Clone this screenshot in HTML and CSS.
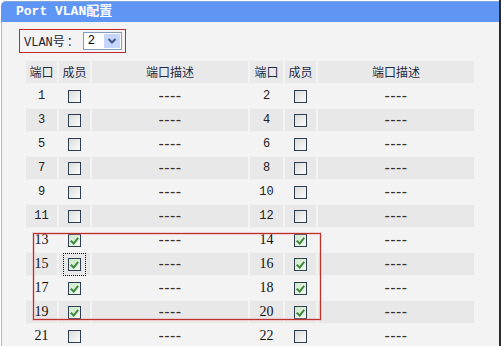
FILE: index.html
```html
<html lang="zh-CN">
<head>
    <meta charset="UTF-8">
    <title>Port VLAN配置</title>
    <link rel="stylesheet" href="styles.css">
</head>
<body>
<div class="page">
    <div class="panel-title">Port VLAN配置</div>
    <div class="panel-body">
        <div class="vlan-pick">
            <span class="vlan-label">VLAN号<span class="colon">：</span></span>
            <div class="fake-select">
                <span class="fake-select-value">2</span>
                <span class="fake-select-btn">
                    <svg width="16" height="14" viewBox="0 0 16 14"><path d="M4.5 5 L8 8.5 L11.5 5" fill="none" stroke="#3f5687" stroke-width="2"/></svg>
                </span>
            </div>
        </div>

        <table class="port-table">
            <colgroup>
                <col class="c-port"><col class="c-member"><col class="c-desc">
                <col class="c-port2"><col class="c-member"><col class="c-desc">
            </colgroup>
            <tr>
                <th>端口</th><th>成员</th><th>端口描述</th>
                <th>端口</th><th>成员</th><th>端口描述</th>
            </tr>
            <tr>
                <td class="port">1</td><td><span class="cb"></span></td><td class="desc">----</td>
                <td class="port">2</td><td><span class="cb"></span></td><td class="desc">----</td>
            </tr>
            <tr class="alt">
                <td class="port">3</td><td><span class="cb"></span></td><td class="desc">----</td>
                <td class="port">4</td><td><span class="cb"></span></td><td class="desc">----</td>
            </tr>
            <tr>
                <td class="port">5</td><td><span class="cb"></span></td><td class="desc">----</td>
                <td class="port">6</td><td><span class="cb"></span></td><td class="desc">----</td>
            </tr>
            <tr class="alt">
                <td class="port">7</td><td><span class="cb"></span></td><td class="desc">----</td>
                <td class="port">8</td><td><span class="cb"></span></td><td class="desc">----</td>
            </tr>
            <tr>
                <td class="port">9</td><td><span class="cb"></span></td><td class="desc">----</td>
                <td class="port">10</td><td><span class="cb"></span></td><td class="desc">----</td>
            </tr>
            <tr class="alt">
                <td class="port">11</td><td><span class="cb"></span></td><td class="desc">----</td>
                <td class="port">12</td><td><span class="cb"></span></td><td class="desc">----</td>
            </tr>
            <tr>
                <td class="port serif">13</td><td><span class="cb on"></span></td><td class="desc">----</td>
                <td class="port serif">14</td><td><span class="cb on"></span></td><td class="desc">----</td>
            </tr>
            <tr class="alt">
                <td class="port serif">15</td><td><span class="cb on focus"></span></td><td class="desc">----</td>
                <td class="port serif">16</td><td><span class="cb on"></span></td><td class="desc">----</td>
            </tr>
            <tr>
                <td class="port serif">17</td><td><span class="cb on"></span></td><td class="desc">----</td>
                <td class="port serif">18</td><td><span class="cb on"></span></td><td class="desc">----</td>
            </tr>
            <tr class="alt">
                <td class="port serif">19</td><td><span class="cb on"></span></td><td class="desc">----</td>
                <td class="port serif">20</td><td><span class="cb on"></span></td><td class="desc">----</td>
            </tr>
            <tr>
                <td class="port serif">21</td><td><span class="cb"></span></td><td class="desc">----</td>
                <td class="port serif">22</td><td><span class="cb"></span></td><td class="desc">----</td>
            </tr>
        </table>

        <!-- red annotation around ports 13-20 -->
        <div class="mark"></div>
    </div>
</div>
</body>
</html>
```

FILE: styles.css
```css
body {
    margin: 0;
    background: #fff;
    font-family: "Liberation Mono", "Noto Sans CJK SC", monospace;
    color: #222;
}

.page {
    width: 499px;
    height: 346px;
    border-right: 2px solid #2b2b2b;
    overflow: hidden;
}

.panel-title {
    margin: 1px 0 0 1px;
    height: 21px;
    line-height: 20px;
    padding-left: 15px;
    background: #5f95f5;
    border-top: 1px solid #86a3d3;
    box-sizing: border-box;
    border-radius: 5px 0 0 0;
    color: #fff;
    font-size: 13px;
    font-weight: bold;
}

.panel-body {
    position: relative;
    margin-left: 1px;
    height: 324px;
    padding-top: 7px;
    box-sizing: border-box;
    background: #f3f3f3;
    border-left: 1px solid #dcb08a;
}

/* VLAN picker */
.vlan-pick {
    display: flex;
    align-items: center;
    gap: 4px;
    width: max-content;
    height: 22px;
    margin-left: 17px;
    padding: 0 3px 0 4px;
    border: 1px solid #c0282d;
}

.vlan-label {
    font-size: 12px;
    color: #1c2233;
}

.vlan-label .colon {
    padding-left: 2px;
}

.fake-select {
    display: flex;
    align-items: center;
    justify-content: space-between;
    width: 39px;
    height: 18px;
    box-sizing: border-box;
    border: 1px solid #7f9db9;
    background: #fff;
    padding: 0 1px 0 4px;
}

.fake-select-value {
    font-size: 12px;
    color: #000;
}

.fake-select-btn {
    display: block;
    width: 16px;
    height: 14px;
    background: #c5d5fb;
}

.fake-select-btn svg {
    display: block;
}

/* port table */
.port-table {
    margin: 6px 0 0 22px;
    border-collapse: separate;
    border-spacing: 2px;
    table-layout: fixed;
    width: 452px;
}

.c-port { width: 31px; }
.c-port2 { width: 33px; }
.c-member { width: 31px; }
.c-desc { width: 156px; }

.port-table th,
.port-table td {
    height: 22px;
    padding: 0;
    text-align: center;
    vertical-align: middle;
    line-height: 22px;
}

.port-table th {
    background: #e9e9e9;
    font-family: "Noto Sans CJK SC", sans-serif;
    font-weight: normal;
    font-size: 12px;
    color: #1e2a44;
}

.port-table tr.alt td {
    background: #e8e8e8;
}

.port {
    font-size: 12px;
}

.port.serif {
    font-family: "Liberation Serif", serif;
    font-size: 14px;
    color: #111;
}

.desc {
    font-family: "Liberation Sans", sans-serif;
    font-size: 16px;
    letter-spacing: 0.4px;
    color: #333;
}

/* checkboxes */
.cb {
    position: relative;
    display: block;
    width: 13px;
    height: 13px;
    margin: 0 auto;
    box-sizing: border-box;
    border: 1px solid #2d3e52;
    background: linear-gradient(135deg, #dcdcd6, #fbfbfb);
}

.cb.on {
    background: linear-gradient(135deg, #cfe8c8, #f2faef);
}

.cb.on::after {
    content: "";
    position: absolute;
    left: 3px;
    top: 1px;
    width: 3px;
    height: 6px;
    border-right: 2px solid #3c8a3c;
    border-bottom: 2px solid #3c8a3c;
    transform: rotate(40deg);
}

.cb.focus {
    outline: 1px dotted #000;
    outline-offset: 4px;
}

.mark {
    position: absolute;
    left: 31px;
    top: 211px;
    width: 288px;
    height: 87px;
    box-sizing: border-box;
    border: 1px solid #b8322f;
    box-shadow: 0 0 0 1px rgba(235, 140, 140, 0.35), inset 0 0 0 1px rgba(235, 140, 140, 0.35);
}
```
